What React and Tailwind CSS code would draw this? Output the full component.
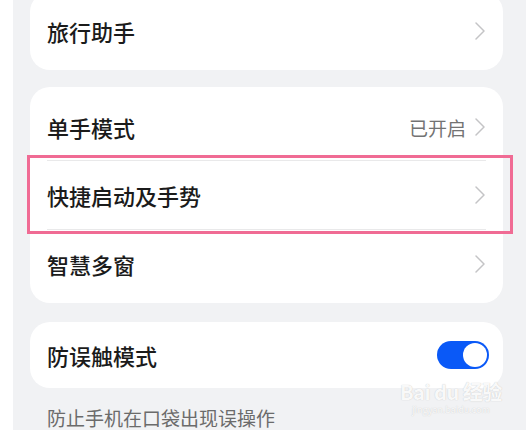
const font = {
  fontFamily: '"Noto Sans CJK SC", "Noto Sans", sans-serif',
};

function Chevron() {
  return (
    <svg width="12" height="20" viewBox="0 0 12 20" className="shrink-0">
      <path
        d="M2 2 L10 10 L2 18"
        fill="none"
        stroke="#c4c4c6"
        strokeWidth="1.5"
        strokeLinecap="round"
        strokeLinejoin="round"
      />
    </svg>
  );
}

function Row({ label, value, className = "" }) {
  return (
    <div className={"flex items-center justify-between " + className}>
      <span className="text-[22px] font-medium leading-none text-[#1b1b1b]">{label}</span>
      <div className="flex items-center gap-2">
        {value && (
          <span className="text-[19px] leading-none text-[#737373]">{value}</span>
        )}
        <Chevron />
      </div>
    </div>
  );
}

function Toggle() {
  return (
    <div className="flex h-[28px] w-[52px] items-center justify-end rounded-full bg-[#0a59f7] px-[2px]">
      <div className="h-[24px] w-[24px] rounded-full bg-white" />
    </div>
  );
}

export default function App() {
  return (
    <div
      className="relative flex h-[430px] w-[526px] overflow-hidden bg-white"
      style={font}
    >
      <div className="w-[13px] shrink-0 bg-white" />
      <div className="flex flex-1 flex-col bg-[#f1f2f4] pl-[17px] pr-[10px]">
        <div className="mt-[-8px] w-[473px] rounded-[20px] bg-white px-[17px]">
          <Row label="旅行助手" className="h-[78px]" />
        </div>

        <div className="mt-[17px] w-[473px] rounded-[20px] bg-white px-[17px] py-[5px]">
          <Row label="单手模式" value="已开启" className="h-[68px] pt-[2px]" />
          <div className="h-px bg-[#e9e9ea]" />
          <Row label="快捷启动及手势" className="h-[68px]" />
          <div className="h-px bg-[#e9e9ea]" />
          <Row label="智慧多窗" className="h-[68px]" />
        </div>

        <div className="mt-[19px] flex h-[77px] w-[473px] items-center justify-between rounded-[20px] bg-white pl-[17px] pr-[14px]">
          <span className="text-[22px] font-medium leading-none text-[#1b1b1b]">防误触模式</span>
          <Toggle />
        </div>

        <p className="mt-[18px] pl-[17px] text-[19px] leading-[24px] text-[#6b6b6b]">
          防止手机在口袋出现误操作
        </p>
      </div>

      <div className="absolute left-[27px] top-[155px] h-[79px] w-[486px] border-[3px] border-[#f06b94]" />

      <div className="absolute left-[400px] top-[382px] flex flex-col items-center text-white/90">
        <span className="text-[20px] font-bold leading-none tracking-tight [text-shadow:0_0_1px_#bbb]">
          Bai du 经验
        </span>
        <span className="mt-[3px] text-[9px] leading-none [text-shadow:0_0_1px_#bbb]">
          jingyan.baidu.com
        </span>
      </div>
    </div>
  );
}
